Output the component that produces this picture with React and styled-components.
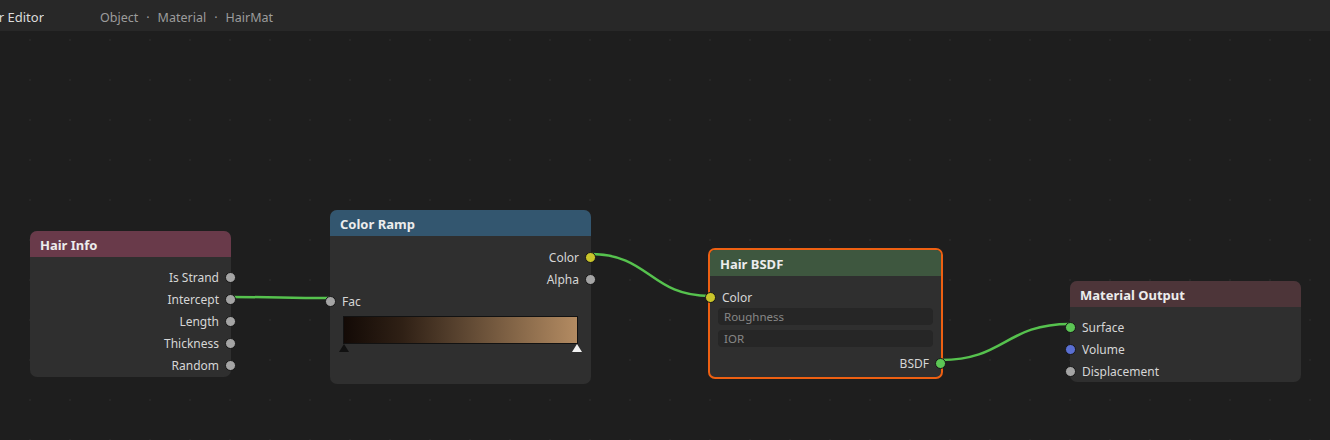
import { createGlobalStyle, styled } from "styled-components";

const Global = createGlobalStyle`
  html, body {
    margin: 0;
    padding: 0;
    background: #1e1e1e;
    font-family: "Noto Sans", "Open Sans", sans-serif;
  }
`;

const Page = styled.div`
  width: 1330px;
  height: 440px;
  display: flex;
  flex-direction: column;
  overflow: hidden;
  background: #1e1e1e;
`;

const TopBar = styled.div`
  height: 31px;
  flex: none;
  box-sizing: border-box;
  padding-top: 3px;
  background: #282828;
  display: flex;
  align-items: center;
  gap: 56px;
`;

const EditorTitle = styled.div`
  width: 44px;
  display: flex;
  justify-content: flex-end;
  overflow: hidden;
  white-space: nowrap;
  color: #dcdcdc;
  font-size: 13px;
`;

const Crumbs = styled.div`
  display: flex;
  align-items: center;
  gap: 8px;
  color: #9c9c9c;
  font-size: 12.5px;
`;

const Canvas = styled.div`
  position: relative;
  flex: 1;
  background-color: #1e1e1e;
  background-image: radial-gradient(circle, #262626 1px, transparent 1.5px);
  background-size: 40px 40px;
  background-position: 10px 29px;
`;

const Links = styled.svg`
  position: absolute;
  inset: 0;
  pointer-events: none;
`;

const Node = styled.div`
  position: absolute;
  left: ${(p) => p.x}px;
  top: ${(p) => p.y}px;
  width: ${(p) => p.w}px;
  background: #2f2f2f;
  border-radius: 7px;
  box-sizing: border-box;
  border: ${(p) => (p.selected ? "2px solid #ee6012" : "none")};
  padding-bottom: ${(p) => p.pb || 0}px;
`;

const NodeHeader = styled.div`
  height: 26px;
  box-sizing: border-box;
  padding: 2px 0 0 10px;
  background: ${(p) => p.color};
  border-radius: ${(p) => (p.selected ? "5px 5px 0 0" : "7px 7px 0 0")};
  color: #ececec;
  font-weight: 700;
  font-size: 13px;
  display: flex;
  align-items: center;
`;

const NodeBody = styled.div`
  padding-top: ${(p) => p.pt}px;
  display: flex;
  flex-direction: column;
`;

const Row = styled.div`
  position: relative;
  height: 22px;
  display: flex;
  align-items: center;
  justify-content: ${(p) => (p.out ? "flex-end" : "flex-start")};
  padding: 0 12px;
  color: #d6d6d6;
  font-size: 12px;
`;

const Socket = styled.span`
  position: absolute;
  top: 50%;
  ${(p) => (p.out ? "right: -5px;" : "left: -5px;")}
  width: 9px;
  height: 9px;
  margin-top: -5px;
  border-radius: 50%;
  background: ${(p) => p.color || "#a4a4a4"};
  border: 1px solid #171717;
`;

const Field = styled.div`
  height: 17px;
  margin: 0 8px 5px;
  background: #262626;
  border-radius: 4px;
  color: #878787;
  font-size: 11.5px;
  display: flex;
  align-items: center;
  padding-left: 6px;
`;

const Ramp = styled.div`
  margin: 4px 13px 0 13px;
  height: 26px;
  border: 1px solid #121212;
  background: linear-gradient(90deg, #130a06 0%, #2f2015 25%, #5a4430 50%, #876849 75%, #b38b62 100%);
`;

const Stops = styled.div`
  display: flex;
  justify-content: space-between;
  margin: 0 9px;
  height: 8px;
`;

const Stop = styled.span`
  width: 0;
  height: 0;
  border-left: 5px solid transparent;
  border-right: 5px solid transparent;
  border-bottom: 8px solid ${(p) => p.color};
`;

const GREEN = "#5cc655";
const YELLOW = "#c9c52b";
const BLUE = "#5a6fd2";

const Port = ({ label, out, color }) => (
  <Row out={out}>
    {label}
    <Socket out={out} color={color} />
  </Row>
);

export default function App() {
  return (
    <Page>
      <Global />
      <TopBar>
        <EditorTitle>
          <span>Shader Editor</span>
        </EditorTitle>
        <Crumbs>
          <span>Object</span>
          <span>·</span>
          <span>Material</span>
          <span>·</span>
          <span>HairMat</span>
        </Crumbs>
      </TopBar>
      <Canvas>
        <Links width="1330" height="409">
          <g fill="none" stroke="#56c24e" strokeWidth="2.5">
            <path d="M231 266 C 280 266, 281 267, 330 267" />
            <path d="M590 223 C 650 223, 650 265, 710 265" />
            <path d="M941 329 C 1005 329, 1005 293, 1070 293" />
          </g>
        </Links>

        <Node x={30} y={200} w={201} pb={1}>
          <NodeHeader color="#693a4a">Hair Info</NodeHeader>
          <NodeBody pt={9}>
            <Port out label="Is Strand" />
            <Port out label="Intercept" />
            <Port out label="Length" />
            <Port out label="Thickness" />
            <Port out label="Random" />
          </NodeBody>
        </Node>

        <Node x={330} y={179} w={261} pb={32}>
          <NodeHeader color="#33566f">Color Ramp</NodeHeader>
          <NodeBody pt={10}>
            <Port out label="Color" color={YELLOW} />
            <Port out label="Alpha" />
            <Port label="Fac" />
            <Ramp />
            <Stops>
              <Stop color="#111" />
              <Stop color="#f2f2f2" />
            </Stops>
          </NodeBody>
        </Node>

        <Node x={708} y={217} w={235} pb={3} selected>
          <NodeHeader color="#3e573f" selected>
            Hair BSDF
          </NodeHeader>
          <NodeBody pt={10}>
            <Port label="Color" color={YELLOW} />
            <Field>Roughness</Field>
            <Field>IOR</Field>
            <Port out label="BSDF" color={GREEN} />
          </NodeBody>
        </Node>

        <Node x={1070} y={250} w={231}>
          <NodeHeader color="#4d3539">Material Output</NodeHeader>
          <NodeBody pt={9}>
            <Port label="Surface" color={GREEN} />
            <Port label="Volume" color={BLUE} />
            <Port label="Displacement" />
          </NodeBody>
        </Node>
      </Canvas>
    </Page>
  );
}
